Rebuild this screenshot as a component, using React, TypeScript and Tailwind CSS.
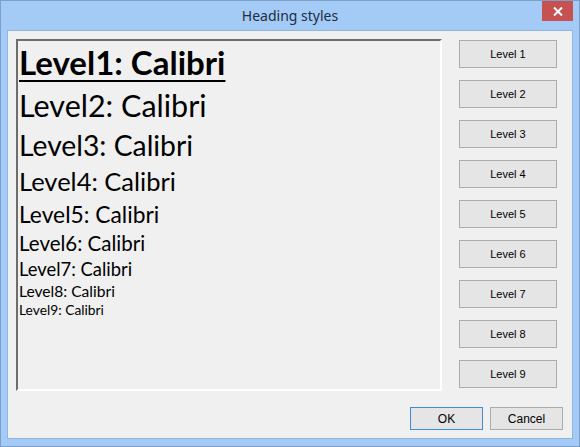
import React from 'react';

const levels = [
  { label: 'Level1: Calibri', cls: 'text-[33px] leading-[40px] mb-[3px] font-bold underline decoration-2 underline-offset-[5px]' },
  { label: 'Level2: Calibri', cls: 'text-[30.5px] leading-[40px]' },
  { label: 'Level3: Calibri', cls: 'text-[28.3px] leading-[40px]' },
  { label: 'Level4: Calibri', cls: 'text-[25.5px] leading-[33px]' },
  { label: 'Level5: Calibri', cls: 'text-[22.8px] leading-[32px]' },
  { label: 'Level6: Calibri', cls: 'text-[20.5px] leading-[27px]' },
  { label: 'Level7: Calibri', cls: 'text-[18.4px] leading-[24px]' },
  { label: 'Level8: Calibri', cls: 'text-[15.6px] leading-[20px]' },
  { label: 'Level9: Calibri', cls: 'text-[13.8px] leading-[18px]' },
];

const App: React.FC = () => {
  return (
    <div className="w-[580px] h-[447px] bg-[#a3cbf5] border border-[#7a9fc9] flex flex-col overflow-hidden">
      {/* Title bar */}
      <div className="h-[29px] flex-none relative flex items-center justify-center">
        <span className="text-[14px] text-[#1e2d44] font-['Noto_Sans',sans-serif]">Heading styles</span>
        <div className="absolute right-[6px] top-0 w-[31px] h-[20px] bg-[#c75050] flex items-center justify-center">
          <svg width="10" height="9" viewBox="0 0 10 9">
            <path d="M1 0.5 L9 8.5 M9 0.5 L1 8.5" stroke="white" strokeWidth="2" />
          </svg>
        </div>
      </div>

      {/* Client area */}
      <div className="flex-1 mx-[6px] mb-[7px] bg-[#f0f0f0] border border-[#8fb6e0] flex flex-col">
        <div className="flex pt-[8px] pl-[8px] pr-[14px] gap-[17px]">
          {/* Sunken preview box */}
          <div className="w-[426px] h-[352px] border-t-2 border-l-2 border-t-[#6d6d6d] border-l-[#6d6d6d] border-b-2 border-r-2 border-b-white border-r-white bg-[#f0f0f0] pl-[1px] pt-[1px] font-['Lato',sans-serif] text-black">
            {levels.map((l) => (
              <div key={l.label} className={`whitespace-nowrap ${l.cls}`}>
                {l.label}
              </div>
            ))}
          </div>

          {/* Level buttons */}
          <div className="flex flex-col gap-[12px] pt-[1px]">
            {[1, 2, 3, 4, 5, 6, 7, 8, 9].map((n) => (
              <button
                key={n}
                className="w-[98px] h-[28px] bg-[#e5e5e5] border border-[#acacac] text-[11px] text-black font-['Liberation_Sans',sans-serif]"
              >
                Level {n}
              </button>
            ))}
          </div>
        </div>

        <div className="flex justify-end gap-[7px] pr-[9px] mt-[16px]">
          <button className="w-[73px] h-[23px] bg-[#e5e5e5] border border-[#3c8de0] text-[12px] text-black font-['Liberation_Sans',sans-serif]">
            OK
          </button>
          <button className="w-[73px] h-[23px] bg-[#e5e5e5] border border-[#acacac] text-[12px] text-black font-['Liberation_Sans',sans-serif]">
            Cancel
          </button>
        </div>
      </div>
    </div>
  );
};

export default App;
